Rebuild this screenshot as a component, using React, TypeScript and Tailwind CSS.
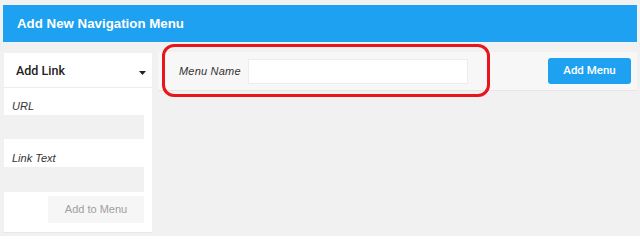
import { useState } from 'react'

// ── Left panel: add link form ────────────────────────────────────────────────

function AddLinkPanel() {
  const [url, setUrl] = useState('')
  const [text, setText] = useState('')

  return (
    <aside className="ml-[1px] w-[148px] h-[179px] bg-white flex flex-col shadow-[0_1px_1px_rgba(0,0,0,0.04)]">
      <div className="h-[35px] flex items-center justify-between pl-[12px] pr-[6px] border-b border-[#ececec]">
        <span className="font-['Roboto',sans-serif] text-[12.5px] font-medium text-[#222] mt-[2px]">Add Link</span>
        <svg width="7" height="4" viewBox="0 0 7 4" className="mt-[5px]">
          <path d="M0 0h7L3.5 4z" fill="#222" />
        </svg>
      </div>

      <label className="block pl-[8px] pt-[10px] pb-[1px] text-[11px] italic text-[#333] leading-[16px]">URL</label>
      <input
        value={url}
        onChange={e => setUrl(e.target.value)}
        className="w-[140px] h-[24px] bg-[#f1f1f1] outline-none px-2 text-xs"
      />

      <label className="block pl-[8px] pt-[11px] pb-[1px] text-[11px] italic text-[#333] leading-[16px]">Link Text</label>
      <input
        value={text}
        onChange={e => setText(e.target.value)}
        className="w-[140px] h-[25px] bg-[#f1f1f1] outline-none px-2 text-xs"
      />

      <div className="flex justify-end pr-[8px] pt-[4px]">
        <button className="w-[96px] h-[27px] bg-[#f6f6f6] text-[11px] text-[#a0a0a0]">
          Add to Menu
        </button>
      </div>
    </aside>
  )
}

// ── Page ──────────────────────────────────────────────────────────────────────

export default function App() {
  const [name, setName] = useState('')

  return (
    <div
      className="relative w-[640px] h-[236px] overflow-hidden bg-[#f1f1f1] pt-[5px] pl-[3px] pr-[3px]"
      style={{ fontFamily: '"Liberation Sans", Arial, sans-serif' }}
    >
      {/* Header */}
      <div className="h-[37px] bg-[#1fa1f2] flex items-center pl-[14px]">
        <h1 className="text-[13.3px] font-bold text-white">Add New Navigation Menu</h1>
      </div>

      <div className="flex items-start mt-[11px]">
        <AddLinkPanel />

        {/* Menu name bar */}
        <div className="ml-[6px] -mt-px flex-1 h-[39px] bg-[#f7f7f7] border-b border-[#e6e6e6] flex items-center pl-[21px] pr-[6px]">
          <span className="text-[11px] italic text-[#333] tracking-[0.2px]">Menu Name</span>
          <input
            value={name}
            onChange={e => setName(e.target.value)}
            className="ml-auto w-[220px] h-[25px] bg-white border border-[#ececec] outline-none px-2 text-xs"
          />
          <div className="w-[80px]" />
          <button className="w-[83px] h-[26px] rounded-[3px] bg-[#1fa1f2] text-white font-['Roboto',sans-serif] text-[11.5px] font-medium">
            Add Menu
          </button>
        </div>
      </div>

      {/* Highlight annotation */}
      <div className="absolute left-[162px] top-[44px] w-[328px] h-[53px] rounded-[12px] border-[3px] border-[#e8151c] pointer-events-none" />
    </div>
  )
}
